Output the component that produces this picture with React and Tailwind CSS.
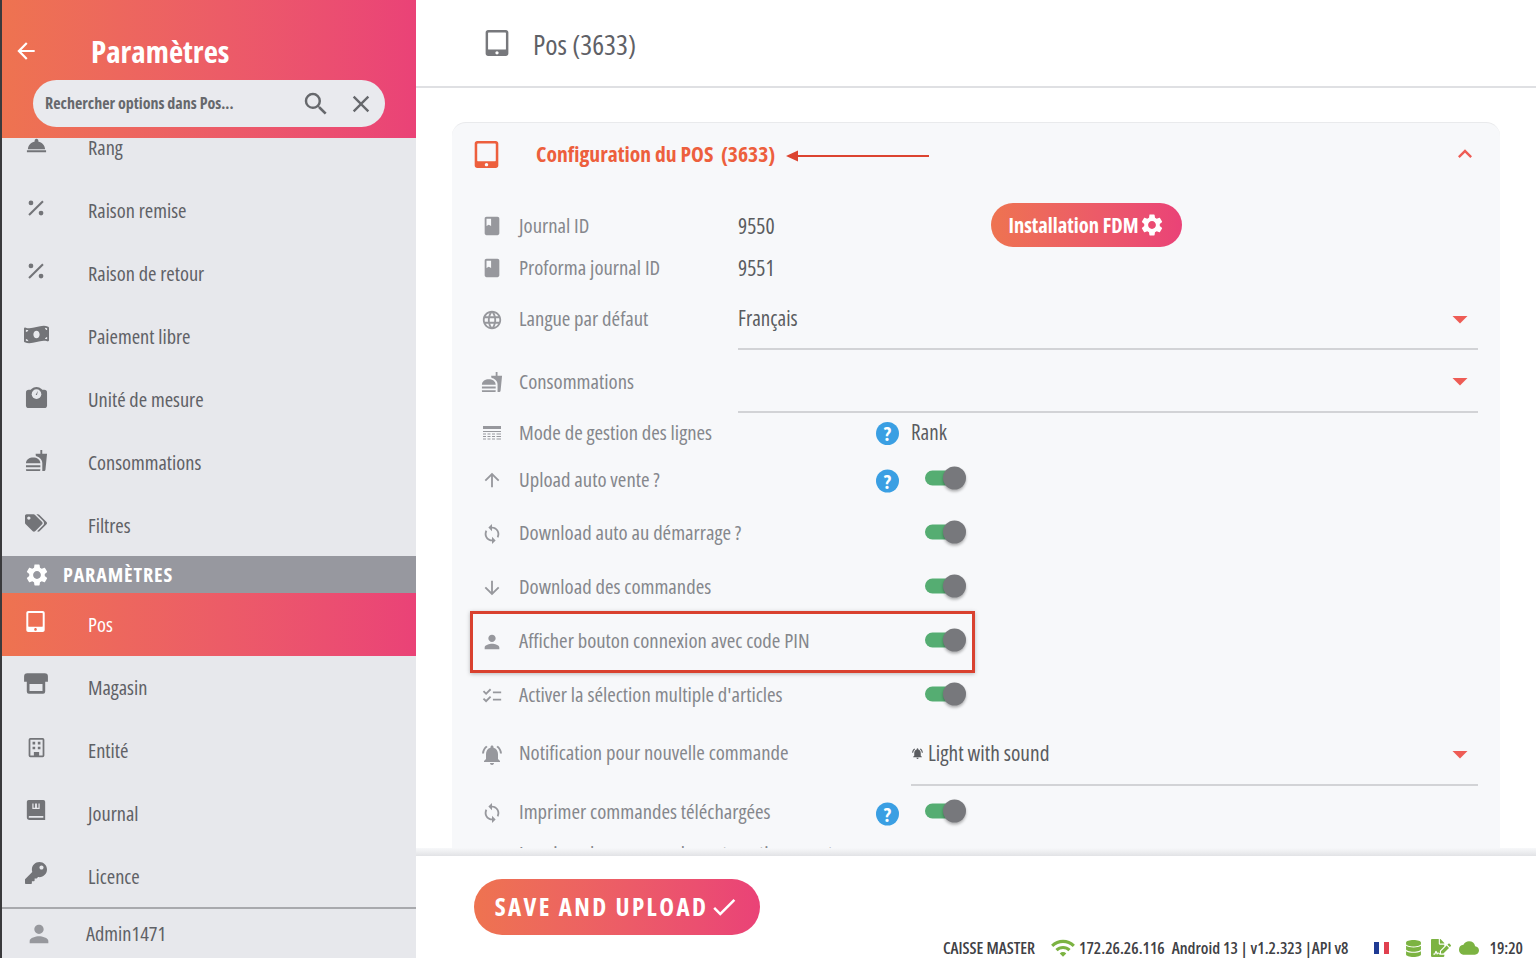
import React from "react";
import {
  MdArrowBack, MdSearch, MdClose, MdRoomService, MdFastfood,
  MdPerson, MdSettings, MdBook, MdLanguage, MdArrowUpward, MdArrowDownward, MdSync, MdChecklist,
  MdNotificationsActive, MdCheck, MdExpandLess, MdArrowDropDown, MdWifi, MdCloud,
} from "react-icons/md";
import { FaMoneyBillWave, FaTags, FaKey, FaDatabase, FaFileSignature, FaTabletAlt } from "react-icons/fa";

function Percent() {
  return (
    <svg width="22" height="22" viewBox="0 0 24 24" fill="currentColor">
      <circle cx="6.500" cy="6.500" r="2.600" />
      <circle cx="17.500" cy="17.500" r="2.600" />
      <path d="M18.800 3.800l1.600 1.600L5.200 20.400l-1.600-1.600z" />
    </svg>
  );
}
function Scale() {
  return (
    <svg width="23" height="23" viewBox="0 0 24 24" fill="currentColor">
      <rect x="1" y="4" width="22" height="19" rx="3" />
      <circle cx="12" cy="8.500" r="7.500" />
      <circle cx="12" cy="8.500" r="5" fill="#e7e8ec" />
      <path d="M13.500 5l-1 4.500h-1.400z" />
    </svg>
  );
}
function Store() {
  return (
    <svg width="26" height="26" viewBox="0 0 24 24" fill="currentColor">
      <path fillRule="evenodd" d="M4 2h16a3 3 0 0 1 3 3v5h-2.500v9a2 2 0 0 1-2 2h-13a2 2 0 0 1-2-2v-9H1V5a3 3 0 0 1 3-3zm2 10v6.500h12V12H6z" />
    </svg>
  );
}
function Building({ size = 22 }) {
  return (
    <svg width={size} height={size} viewBox="0 0 24 24" fill="currentColor">
      <path fillRule="evenodd" d="M5 1h14a2 2 0 0 1 2 2v18a2 2 0 0 1-2 2H5a2 2 0 0 1-2-2V3a2 2 0 0 1 2-2zm0 2v18h4v-4h6v4h4V3H5z" />
      <path d="M7.500 5.500h3v3h-3zM13.500 5.500h3v3h-3zM7.500 11h3v3h-3zM13.500 11h3v3h-3z" />
    </svg>
  );
}
function JournalIcon({ size = 22 }) {
  return (
    <svg width={size} height={size} viewBox="0 0 24 24" fill="currentColor">
      <path fillRule="evenodd" d="M4 1h16a2 2 0 0 1 2 2v20H5a3 3 0 0 1-3-3V3a2 2 0 0 1 2-2zm1 17.500a1 1 0 0 0 0 2h15v-2H5z" />
      <path d="M8 5h1.300v4.500h1.700V5h2v4.500h1.700V5H16v6H8z" fill="#e7e8ec" />
    </svg>
  );
}
function LinesIcon() {
  return (
    <svg width="20" height="20" viewBox="0 0 20 20" fill="currentColor">
      <path d="M1 3h18v3H1zM1 8h18v1H1z" />
      <path d="M1 10.500h3v1H1zM5.500 10.500h3v1h-3zM10 10.500h3v1h-3zM14.500 10.500h4.500v1h-4.500zM1 13h3v1H1zM5.500 13h3v1h-3zM10 13h3v1h-3zM14.500 13h4.500v1h-4.500zM1 15.500h3v1H1zM5.500 15.500h3v1h-3zM10 15.500h3v1h-3zM14.500 15.500h4.500v1h-4.500z" />
    </svg>
  );
}

function NavRow({ icon, label, className = "", lift = "mb-[2px]" }) {
  return (
    <div className={`flex h-[63px] shrink-0 items-center text-[20.400px] text-[#5f6166] ${className}`}>
      <div className="mb-[7px] flex w-[68px] justify-center text-[#737478]">{icon}</div>
      <div className={`pl-[18px] ${lift}`}>{label}</div>
    </div>
  );
}

function Toggle() {
  return (
    <div className="relative h-[23px] w-[41px]">
      <div className="absolute left-0 top-[4px] h-[15px] w-[34px] rounded-full bg-[#55ad72]" />
      <div className="absolute right-0 top-0 h-[23px] w-[23px] rounded-full bg-[#77787c] shadow-[0_2px_3px_rgba(0,0,0,0.3)]" />
    </div>
  );
}

function Help() {
  return (
    <div className="flex h-[23px] w-[23px] items-center justify-center rounded-full bg-[#3a9fe3] text-[20px] font-bold leading-none text-white">?</div>
  );
}

function Row({ icon, label, h, lift = "", children }) {
  return (
    <div className={`relative flex shrink-0 items-center ${h}`}>
      <div className="flex w-[44px] justify-center text-[#97989d]">{icon}</div>
      <div className={`whitespace-nowrap pl-[5px] text-[20.700px] text-[#85878c] ${lift}`}>{label}</div>
      {children}
    </div>
  );
}

function ToggleRow({ icon, label, h = "h-[54px]", help, lift = "mb-[2px]" }) {
  return (
    <Row icon={icon} label={label} h={h} lift={lift}>
      <div className="absolute left-[406px] top-1/2 mt-[1px] -translate-y-1/2">{help && <Help />}</div>
      <div className="absolute left-[455px] top-1/2 mt-[-2px] -translate-y-1/2"><Toggle /></div>
    </Row>
  );
}

function SelectField({ text, className = "" }) {
  return (
    <div className={`flex h-full items-center justify-between border-b-2 border-[#d2d3d6] pr-[8px] text-[21px] text-[#5a5c60] ${className}`}>
      <span>{text}</span>
      <MdArrowDropDown size={36} className="mr-[-8px] text-[#ee5c55]" />
    </div>
  );
}

export default function App() {
  const gradient = "bg-gradient-to-r from-[#ee7350] to-[#ea4277]";
  return (
    <div className="flex h-[958px] w-[1536px] overflow-hidden bg-white font-['Open_Sans',sans-serif] font-stretch-condensed">
      <aside className="flex h-full w-[416px] shrink-0 flex-col border-l-2 border-[#3a3a3c] bg-[#e7e8ec]">
        <header className={`relative z-10 h-[138px] shrink-0 ${gradient}`}>
          <div className="flex h-[80px] items-center pt-[22px]">
            <div className="flex w-[47px] justify-center text-white"><MdArrowBack size={26} /></div>
            <h1 className="ml-[42px] text-[31px] font-bold leading-none text-white">Paramètres</h1>
          </div>
          <div className="ml-[31px] flex h-[47px] w-[352px] items-center rounded-full bg-[#e9eaee] pl-[12px] pr-[10px] text-[#66686c]">
            <span className="mb-[2px] flex-1 text-[16px] font-bold">Rechercher options dans Pos...</span>
            <MdSearch size={30} className="mr-[16px]" />
            <MdClose size={28} />
          </div>
        </header>
        <div className="flex flex-1 flex-col overflow-hidden">
          <NavRow className="mt-[-21px]" icon={<MdRoomService size={23} />} label="Rang" />
          <NavRow icon={<Percent />} label="Raison remise" />
          <NavRow icon={<Percent />} label="Raison de retour" />
          <NavRow icon={<FaMoneyBillWave size={25} />} label="Paiement libre" />
          <NavRow icon={<Scale />} label="Unité de mesure" />
          <NavRow icon={<MdFastfood size={23} />} label="Consommations" />
          <NavRow icon={<FaTags size={22} />} label="Filtres" />
          <div className="mt-[-2px] flex h-[37px] shrink-0 items-center bg-[#97989f] text-white">
            <div className="flex w-[70px] justify-center"><MdSettings size={26} /></div>
            <span className="ml-[-9px] text-[20px] font-bold tracking-[0.9px]">PARAMÈTRES</span>
          </div>
          <div className={`flex h-[63px] shrink-0 items-center text-[20.400px] text-white ${gradient}`}>
            <div className="mb-[6px] flex w-[66px] justify-center"><FaTabletAlt size={21} /></div>
            <div className="pl-[20px]">Pos</div>
          </div>
          <NavRow lift="" icon={<Store />} label="Magasin" />
          <NavRow lift="" icon={<Building size={21} />} label="Entité" />
          <NavRow lift="" icon={<JournalIcon size={22} />} label="Journal" />
          <NavRow lift="" icon={<FaKey size={22} />} label="Licence" />
          <div className="mt-[-1px] flex flex-1 items-center border-t-2 border-[#a8a9ad] text-[20.400px] text-[#5f6166]">
            <div className="flex w-[74px] justify-center text-[#97989d]"><MdPerson size={28} /></div>
            <span className="pl-[10px]">Admin1471</span>
          </div>
        </div>
      </aside>

      <main className="flex h-full min-w-0 flex-1 flex-col">
        <div className="flex h-[88px] shrink-0 items-center border-b-2 border-[#dfe0e3] pl-[68px]">
          <FaTabletAlt size={26} className="text-[#77787c]" />
          <span className="ml-[23px] mt-[1px] text-[28px] text-[#5f6166]">Pos (3633)</span>
        </div>

        <div className="min-h-0 flex-1 overflow-hidden px-[36px] pt-[34px]">
          <section className="rounded-t-[14px] border-t border-[#e9eaec] bg-[#f7f8fa] pl-[18px] pr-[22px]">
            <div className="relative flex h-[82px] items-center pb-[20px]">
              <FaTabletAlt size={27} className="ml-[3px] text-[#ed5f3d]" />
              <h2 className="ml-[36px] text-[21.600px] font-bold text-[#ed5f3d]">Configuration du POS&nbsp;&nbsp;(3633)</h2>
              <svg className="absolute left-[316px] top-[27px]" width="144" height="12" viewBox="0 0 144 12">
                <path d="M0 6l12-5.500v4.500h131v2H12v4.500z" fill="#dc4430" />
              </svg>
              <MdExpandLess size={28} className="absolute right-[-1px] top-[17px] text-[#ee5c55]" />
            </div>

            <div className="flex flex-col">
              <Row icon={<MdBook size={22} />} label="Journal ID" h="h-[42px]">
                <span className="absolute left-[268px] text-[21.500px] text-[#5a5c60]">9550</span>
                <button className={`absolute left-[521px] mt-[-2px] flex h-[44px] w-[191px] items-center justify-center rounded-full text-[20.500px] font-bold text-white ${gradient}`}>
                  Installation FDM<MdSettings size={26} />
                </button>
              </Row>
              <Row icon={<MdBook size={22} />} label="Proforma journal ID" h="h-[42px]">
                <span className="absolute left-[268px] text-[21.500px] text-[#5a5c60]">9551</span>
              </Row>
              <Row icon={<MdLanguage size={22} />} label="Langue par défaut" h="h-[61px]" lift="mb-[2px]">
                <SelectField text="Français" className="absolute bottom-0 left-[268px] right-0" />
              </Row>
              <Row icon={<MdFastfood size={22} />} label="Consommations" h="h-[63px]">
                <SelectField text="" className="absolute bottom-0 left-[268px] right-0" />
              </Row>
              <Row icon={<LinesIcon />} label="Mode de gestion des lignes" h="h-[40px]">
                <div className="absolute left-[406px] mt-[1px]"><Help /></div>
                <span className="absolute left-[441px] text-[21px] text-[#5a5c60]">Rank</span>
              </Row>
              <ToggleRow icon={<MdArrowUpward size={22} />} label="Upload auto vente ?" lift="" help />
              <ToggleRow icon={<MdSync size={22} />} label="Download auto au démarrage ?" />
              <ToggleRow icon={<MdArrowDownward size={22} />} label="Download des commandes" />
              <div className="relative">
                <ToggleRow icon={<MdPerson size={22} />} label="Afficher bouton connexion avec code PIN" />
                <div className="absolute bottom-[-4px] left-0 right-[503px] top-[-4px] border-[3px] border-[#d9412f] shadow-[0_1px_4px_rgba(0,0,0,0.25)]" />
              </div>
              <ToggleRow icon={<MdChecklist size={22} />} label="Activer la sélection multiple d'articles" />
              <Row icon={<MdNotificationsActive size={24} />} label="Notification pour nouvelle commande" h="h-[63px]" lift="mb-[4px]">
                <div className="absolute bottom-0 left-[441px] right-0 h-full">
                  <SelectField text={<span className="flex items-center text-[21.400px]"><MdNotificationsActive size={13} className="mr-[4px] text-[#5a5c60]" />Light with sound</span>} />
                </div>
              </Row>
              <ToggleRow icon={<MdSync size={22} />} label="Imprimer commandes téléchargées" help />
              <Row label="Imprimer les commandes automatiquement" h="h-[28px]" />
            </div>
          </section>
        </div>

        <footer className="relative z-10 h-[110px] shrink-0">
          <div className="h-[8px] bg-gradient-to-b from-[#f7f8fa] to-[#e2e3e6]" />
          <div className="flex h-[102px] items-start justify-between pl-[58px] pr-[13px]">
            <button className={`mt-[23px] flex h-[56px] w-[286px] items-center justify-center rounded-full text-[25px] font-bold tracking-[2.400px] text-white ${gradient}`}>
              SAVE AND UPLOAD<MdCheck size={30} className="ml-[1px]" />
            </button>
            <div className="mt-[79px] flex items-center text-[16.500px] font-semibold leading-none text-[#3f4145]">
              <span>CAISSE MASTER</span>
              <MdWifi size={26} className="ml-[15px] text-[#7cb342]" />
              <span className="ml-[3px]">172.26.26.116</span>
              <span className="ml-[7px]">Android 13 | v1.2.323 |API v8</span>
              <div className="ml-[25px] flex h-[12px] w-[16px]">
                <div className="flex-1 bg-[#1f3a93]" />
                <div className="flex-1 bg-white" />
                <div className="flex-1 bg-[#e0404f]" />
              </div>
              <FaDatabase size={17} className="ml-[15px] text-[#7cb342]" />
              <FaFileSignature size={20} className="ml-[9px] text-[#7cb342]" />
              <MdCloud size={20} className="ml-[8px] text-[#7cb342]" />
              <span className="ml-[11px]">19:20</span>
            </div>
          </div>
        </footer>
      </main>
    </div>
  );
}
